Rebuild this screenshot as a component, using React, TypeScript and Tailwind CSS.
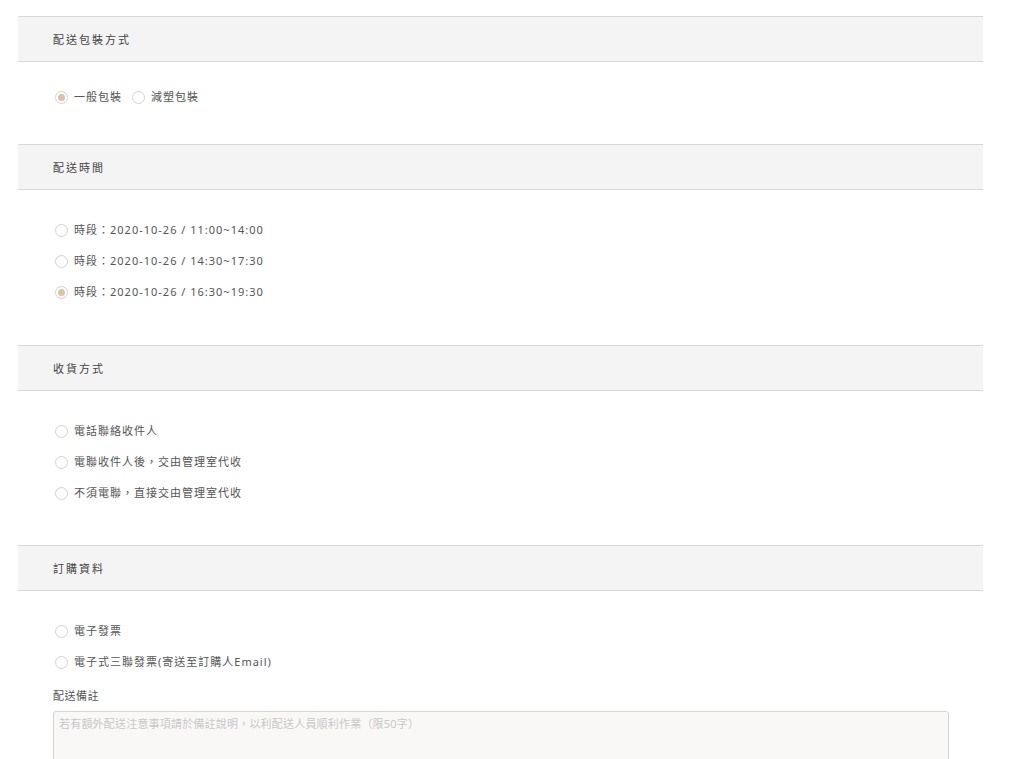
import React from "react";

const FONT = { fontFamily: '"Noto Sans", "Noto Sans CJK TC", sans-serif' };

function Radio({ label, checked }: { label: string; checked?: boolean }) {
  return (
    <label className="flex items-center h-[20px] text-[11px] tracking-[1px] text-[#555]">
      <span className="w-[13px] h-[13px] rounded-full border border-[#d2d2d2] bg-white grid place-items-center shrink-0">
        {checked && <span className="w-[7px] h-[7px] rounded-full bg-[#d8c3a3]" />}
      </span>
      <span className="ml-[6px]">{label}</span>
    </label>
  );
}

function SectionHeader({ title }: { title: string }) {
  return (
    <div className="h-[46px] flex items-center pl-[35px] pt-[3px] bg-[#f4f4f4] border-y border-[#d8d8d8]">
      <p className="text-[11px] tracking-[2px] text-[#444]">{title}</p>
    </div>
  );
}

export default function App() {
  return (
    <div className="bg-white min-h-screen pt-[16px] pl-[18px]" style={FONT}>
      <div className="w-[965px]">
        <SectionHeader title="配送包裝方式" />
        <div className="flex items-center gap-[10px] pl-[37px] pt-[25px] pb-[37px]">
          <Radio label="一般包裝" checked />
          <Radio label="減塑包裝" />
        </div>

        <SectionHeader title="配送時間" />
        <div className="flex flex-col gap-[11px] pl-[37px] pt-[30px] pb-[43px]">
          <Radio label="時段：2020-10-26 / 11:00~14:00" />
          <Radio label="時段：2020-10-26 / 14:30~17:30" />
          <Radio label="時段：2020-10-26 / 16:30~19:30" checked />
        </div>

        <SectionHeader title="收貨方式" />
        <div className="flex flex-col gap-[11px] pl-[37px] pt-[30px] pb-[42px]">
          <Radio label="電話聯絡收件人" />
          <Radio label="電聯收件人後，交由管理室代收" />
          <Radio label="不須電聯，直接交由管理室代收" />
        </div>

        <SectionHeader title="訂購資料" />
        <div className="pl-[35px] pt-[30px]">
          <div className="flex flex-col gap-[11px] pl-[2px]">
            <Radio label="電子發票" />
            <Radio label="電子式三聯發票(寄送至訂購人Email)" />
          </div>
          <p className="mt-[14px] text-[11px] tracking-[0.5px] text-[#555] leading-[20px]">配送備註</p>
          <textarea
            className="mt-[5px] block w-[896px] h-[80px] rounded-[3px] border border-[#d4d4d4] bg-[#f9f8f7] px-[5px] py-[4px] text-[11px] tracking-[0.2px] text-[#555] placeholder:text-[#c8c8c8] resize-none outline-none"
            placeholder="若有額外配送注意事項請於備註說明，以利配送人員順利作業（限50字）"
            style={FONT}
          />
        </div>
      </div>
    </div>
  );
}
